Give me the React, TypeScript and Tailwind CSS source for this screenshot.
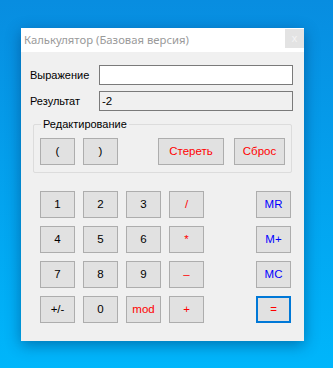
import React, { useState } from 'react';

const ui = { fontFamily: '"Liberation Sans", Arial, sans-serif' };
const titleFont = { fontFamily: '"Noto Sans", "Open Sans", sans-serif' };

type Tone = 'black' | 'red' | 'blue';

const toneClass: Record<Tone, string> = {
  black: 'text-black',
  red: 'text-[#ff0000]',
  blue: 'text-[#0000ff]',
};

const Btn: React.FC<{ label: string; tone?: Tone; w?: string; focused?: boolean; onClick?: () => void }> = ({
  label,
  tone = 'black',
  w = 'w-[35px]',
  focused,
  onClick,
}) => (
  <button
    onClick={onClick}
    className={`${w} h-[27px] bg-[#e1e1e1] text-[11.5px] leading-none flex items-center justify-center ${
      focused ? 'border-2 border-[#0078d7]' : 'border border-[#adadad]'
    } ${toneClass[tone]}`}
  >
    {label}
  </button>
);

const KEYS: { label: string; tone: Tone }[][] = [
  [{ label: '1', tone: 'black' }, { label: '2', tone: 'black' }, { label: '3', tone: 'black' }, { label: '/', tone: 'red' }],
  [{ label: '4', tone: 'black' }, { label: '5', tone: 'black' }, { label: '6', tone: 'black' }, { label: '*', tone: 'red' }],
  [{ label: '7', tone: 'black' }, { label: '8', tone: 'black' }, { label: '9', tone: 'black' }, { label: '–', tone: 'red' }],
  [{ label: '+/-', tone: 'black' }, { label: '0', tone: 'black' }, { label: 'mod', tone: 'red' }, { label: '+', tone: 'red' }],
];

const MEM = ['MR', 'M+', 'MC'];

const App: React.FC = () => {
  const [expr, setExpr] = useState('');
  const [result] = useState('-2');

  return (
    <div className="w-[333px] h-[368px] overflow-hidden bg-gradient-to-b from-[#088de0] to-[#00b6fb] pt-[28px] pl-[21px]" style={ui}>
      <div className="w-[283px] h-[313px] bg-[#f0f0f0] shadow-[0_4px_14px_rgba(0,40,90,0.45)] flex flex-col">
        {/* title bar */}
        <div className="h-[24px] bg-white flex items-start justify-between">
          <span className="pl-[3px] pt-[3px] text-[11.3px] text-[#9a9a9a] leading-[18px]" style={titleFont}>
            Калькулятор (Базовая версия)
          </span>
          <div className="w-[19px] h-[19px] mt-[1px] bg-[#e3e3e3] flex items-center justify-center text-[11px] text-[#f4f4f4] leading-none">
            x
          </div>
        </div>

        <div className="pl-[9px] pt-[13px] flex flex-col">
          <div className="flex items-center h-[20px]">
            <span className="w-[68px] text-[11px] text-black">Выражение</span>
            <input
              value={expr}
              onChange={(e) => setExpr(e.target.value)}
              className="ml-[1px] w-[194px] h-[20px] bg-white border border-[#7a7a7a] outline-none px-[2px] text-[11px]"
            />
          </div>
          <div className="flex items-center h-[20px] mt-[6px]">
            <span className="w-[68px] text-[11px] text-black">Результат</span>
            <div className="ml-[1px] w-[194px] h-[20px] bg-[#f0f0f0] border border-[#7a7a7a] px-[2px] text-[11.5px] leading-[18px] text-black">
              {result}
            </div>
          </div>

          {/* group box */}
          <div className="relative ml-[3px] mt-[13px] w-[259px] h-[49px] border border-[#dcdcdc] rounded-[2px] pt-[13px] pl-[6px] flex">
            <span className="absolute left-[7px] -top-[8px] bg-[#f0f0f0] px-[2px] text-[11px] leading-[14px] text-black">
              Редактирование
            </span>
            <div className="flex gap-[8px]">
              <Btn label="(" />
              <Btn label=")" />
            </div>
            <div className="ml-[40px] flex gap-[10px]">
              <Btn label="Стереть" tone="red" w="w-[66px]" />
              <Btn label="Сброс" tone="red" w="w-[51px]" />
            </div>
          </div>

          {/* keypad */}
          <div className="mt-[18px] ml-[10px] flex">
            <div className="grid grid-cols-[repeat(4,35px)] gap-x-[8px] gap-y-[8px]">
              {KEYS.flat().map((k, i) => (
                <Btn key={i} label={k.label} tone={k.tone} />
              ))}
            </div>
            <div className="ml-[52px] flex flex-col gap-[8px]">
              {MEM.map((m) => (
                <Btn key={m} label={m} tone="blue" />
              ))}
              <Btn label="=" tone="red" focused />
            </div>
          </div>
        </div>
      </div>
    </div>
  );
};

export default App;
